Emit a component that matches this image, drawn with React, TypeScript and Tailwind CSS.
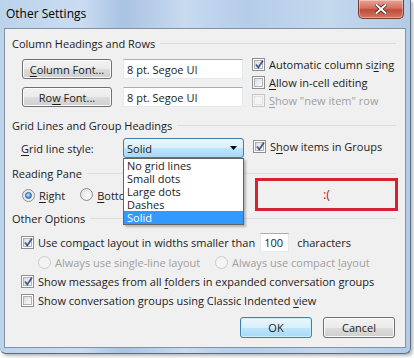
import React from "react";

function U({ children }: { children: React.ReactNode }) {
  return <span className="underline underline-offset-2 decoration-[1px]">{children}</span>;
}

function SectionHeader({ title, className = "" }: { title: string; className?: string }) {
  return (
    <div className={`flex items-center h-[14px] ${className}`}>
      <span className="pr-[5px] whitespace-nowrap">{title}</span>
      <div className="flex-1 h-px bg-[#d5dfe5]" />
    </div>
  );
}

function CheckBox({ checked = false, disabled = false }: { checked?: boolean; disabled?: boolean }) {
  return (
    <span
      className={`relative inline-flex shrink-0 w-[13px] h-[13px] border p-px ${
        disabled ? "border-[#c5c5c5] bg-[#f4f4f4]" : "border-[#8e8f8f] bg-white"
      }`}
    >
      <span
        className={`block w-full h-full border ${
          disabled
            ? "border-[#e3e3e3] bg-[#f4f4f4]"
            : "border-[#aeb3b9] bg-[linear-gradient(135deg,#dcdcdc,#fbfbfb)]"
        }`}
      />
      {checked && (
        <svg className="absolute left-[1px] top-[0px]" width="11" height="11" viewBox="0 0 11 11">
          <path d="M2 5.5 L4.3 8.5 L9 1.5" fill="none" stroke="#44588f" strokeWidth="1.8" />
        </svg>
      )}
    </span>
  );
}

function Radio({ checked = false, disabled = false }: { checked?: boolean; disabled?: boolean }) {
  return (
    <span
      className={`relative inline-flex shrink-0 items-center justify-center w-[13px] h-[13px] rounded-full border ${
        disabled
          ? "border-[#cacaca] bg-[#f4f4f4]"
          : "border-[#8e8f8f] bg-[radial-gradient(circle_at_60%_60%,#fdfdfd,#d9d9d9)]"
      }`}
    >
      {checked && (
        <span className="w-[7px] h-[7px] rounded-full bg-[radial-gradient(circle_at_40%_35%,#bfe2fb,#2a67b8)] border border-[#285d9c]" />
      )}
    </span>
  );
}

function Button({ children, primary = false, className = "" }: { children: React.ReactNode; primary?: boolean; className?: string }) {
  return (
    <div
      className={`flex items-center justify-center rounded-[3px] border ${
        primary
          ? "border-[#3c7fb1] bg-[linear-gradient(180deg,#eaf6fd_0%,#d9f0fc_50%,#bee6fd_51%,#a7d9f5_100%)] shadow-[inset_0_0_0_1px_#c8f0ff]"
          : "border-[#707070] bg-[linear-gradient(180deg,#f2f2f2_0%,#ebebeb_50%,#dddddd_51%,#cfcfcf_100%)] shadow-[inset_0_0_0_1px_#fcfcfc]"
      } ${className}`}
    >
      <span>{children}</span>
    </div>
  );
}

function TextBox({ value, className = "" }: { value: string; className?: string }) {
  return (
    <div
      className={`flex items-center bg-white border border-[#e3e9ef] border-t-[#abadb3] px-[3px] ${className}`}
    >
      {value}
    </div>
  );
}

export default function App() {
  return (
    <div className="w-[414px] h-[358px] bg-[#fafafa] overflow-hidden font-['Open_Sans',sans-serif] text-[11px] text-[#1b1b1b] leading-none">
      <div className="relative w-[411px] h-[354px] px-[4px] rounded-b-[6px] border-r border-b border-[#5d6b7a] bg-[linear-gradient(90deg,#bcd3ec_0%,#c9dcf1_20%,#a9c3e2_30%,#c7daf0_45%,#b5cde9_60%,#c4d8ee_80%,#b2cbe6_100%)] shadow-[2px_2px_3px_rgba(0,0,0,0.25)]">
        {/* Title bar */}
        <div className="flex items-center h-[28px] pl-[2px] text-[12px] text-black">
          <span>Other Settings</span>
          <div className="ml-auto mr-[2px] self-start flex items-center justify-center w-[46px] h-[19px] rounded-b-[5px] border border-t-0 border-[#7a3a36] bg-[linear-gradient(180deg,#e8a497_0%,#d3705f_45%,#c14a36_55%,#d4776a_100%)] shadow-[inset_0_0_0_1px_rgba(255,255,255,0.35)]">
            <svg width="12" height="10" viewBox="0 0 12 10">
              <path d="M1.5 1 L10.5 9 M10.5 1 L1.5 9" stroke="#3e1b17" strokeWidth="3.4" strokeLinecap="square" />
              <path d="M1.5 1 L10.5 9 M10.5 1 L1.5 9" stroke="#ffffff" strokeWidth="2" strokeLinecap="square" />
            </svg>
          </div>
        </div>

        {/* Client area */}
        <div className="relative h-[320px] border border-[#8593a4] bg-[#f0f0f0] pl-[7px] pr-[9px] pt-[7px]">
          <SectionHeader title="Column Headings and Rows" />

          <div className="flex mt-[5px]">
            <div className="flex flex-col gap-[8px] ml-[10px] mt-[4px]">
              <div className="flex gap-[11px] h-[20px]">
                <Button className="w-[90px]">
                  <U>C</U>olumn Font...
                </Button>
                <TextBox className="w-[120px]" value="8 pt. Segoe UI" />
              </div>
              <div className="flex gap-[11px] h-[20px]">
                <Button className="w-[90px]">
                  Ro<U>w</U> Font...
                </Button>
                <TextBox className="w-[120px]" value="8 pt. Segoe UI" />
              </div>
            </div>
            <div className="flex flex-col ml-[9px]">
              <div className="flex items-center gap-[4px] h-[18px]">
                <CheckBox checked />
                <span>
                  Automatic column si<U>z</U>ing
                </span>
              </div>
              <div className="flex items-center gap-[4px] h-[18px]">
                <CheckBox />
                <span>
                  <U>A</U>llow in-cell editing
                </span>
              </div>
              <div className="flex items-center gap-[4px] h-[18px] text-[#a0a0a0]">
                <CheckBox disabled />
                <span>
                  <U>S</U>how "new item" row
                </span>
              </div>
            </div>
          </div>

          <SectionHeader title="Grid Lines and Group Headings" className="mt-[9px]" />

          <div className="flex items-center mt-[6px] h-[20px]">
            <span className="ml-[9px] w-[102px]">
              <U>G</U>rid line style:
            </span>
            <div className="relative w-[121px] h-[20px]">
              <div className="flex items-center h-full rounded-[3px] border border-[#3c7fb1] bg-[linear-gradient(180deg,#eaf6fd_0%,#d9f0fc_50%,#bee6fd_51%,#a7d9f5_100%)] pl-[3px] pr-[6px]">
                <span>Solid</span>
                <svg className="ml-auto" width="7" height="4" viewBox="0 0 7 4">
                  <path d="M0 0 H7 L3.5 4 Z" fill="#000" />
                </svg>
              </div>
              <div className="absolute left-0 top-full z-10 w-[121px] bg-white border border-[#646464] shadow-[2px_2px_2px_rgba(0,0,0,0.25)] flex flex-col">
                <div className="h-[13px] flex items-center px-[3px]">No grid lines</div>
                <div className="h-[13px] flex items-center px-[3px]">Small dots</div>
                <div className="h-[13px] flex items-center px-[3px]">Large dots</div>
                <div className="h-[13px] flex items-center px-[3px]">Dashes</div>
                <div className="h-[13px] flex items-center px-[3px] bg-[#3399ff] text-white">Solid</div>
              </div>
            </div>
            <div className="flex items-center gap-[4px] ml-[9px] -mt-[4px]">
              <CheckBox checked />
              <span>
                S<U>h</U>ow items in Groups
              </span>
            </div>
          </div>

          <SectionHeader title="Reading Pane" className="mt-[8px]" />

          <div className="flex items-center h-[14px] mt-[8px] ml-[10px]">
            <Radio checked />
            <span className="ml-[4px]">
              <U>R</U>ight
            </span>
            <span className="ml-[15px]">
              <Radio />
            </span>
            <span className="ml-[4px]">
              <U>B</U>ottom
            </span>
          </div>

          <SectionHeader title="Other Options" className="mt-[9px]" />

          <div className="flex items-center h-[19px] mt-[8px] ml-[9px]">
            <CheckBox checked />
            <span className="ml-[4px]">
              Use com<U>p</U>act layout in widths smaller than
            </span>
            <TextBox className="ml-[5px] w-[29px] h-[19px]" value="100" />
            <span className="ml-[8px]">characters</span>
          </div>

          <div className="flex items-center h-[14px] mt-[3px] ml-[26px] text-[#a0a0a0]">
            <Radio disabled />
            <span className="ml-[4px] w-[160px]">Always use single-line layout</span>
            <Radio disabled />
            <span className="ml-[4px]">
              Always use compact <U>l</U>ayout
            </span>
          </div>

          <div className="flex items-center h-[14px] mt-[5px] ml-[9px]">
            <CheckBox checked />
            <span className="ml-[4px]">
              Show messages from all <U>f</U>olders in expanded conversation groups
            </span>
          </div>

          <div className="flex items-center h-[14px] mt-[5px] ml-[9px]">
            <CheckBox />
            <span className="ml-[4px]">
              Show conversation groups using Classic Indented <U>v</U>iew
            </span>
          </div>

          <div className="flex justify-end gap-[11px] mt-[10px] pr-[1px]">
            <Button primary className="w-[72px] h-[21px]">
              OK
            </Button>
            <Button className="w-[72px] h-[21px]">Cancel</Button>
          </div>

          {/* red annotation box */}
          <div className="absolute left-[250px] top-[149px] w-[143px] h-[33px] border-[3px] border-[#d42232] flex items-center justify-center text-[#c8202a] text-[13px]">
            :(
          </div>
        </div>
      </div>
    </div>
  );
}
